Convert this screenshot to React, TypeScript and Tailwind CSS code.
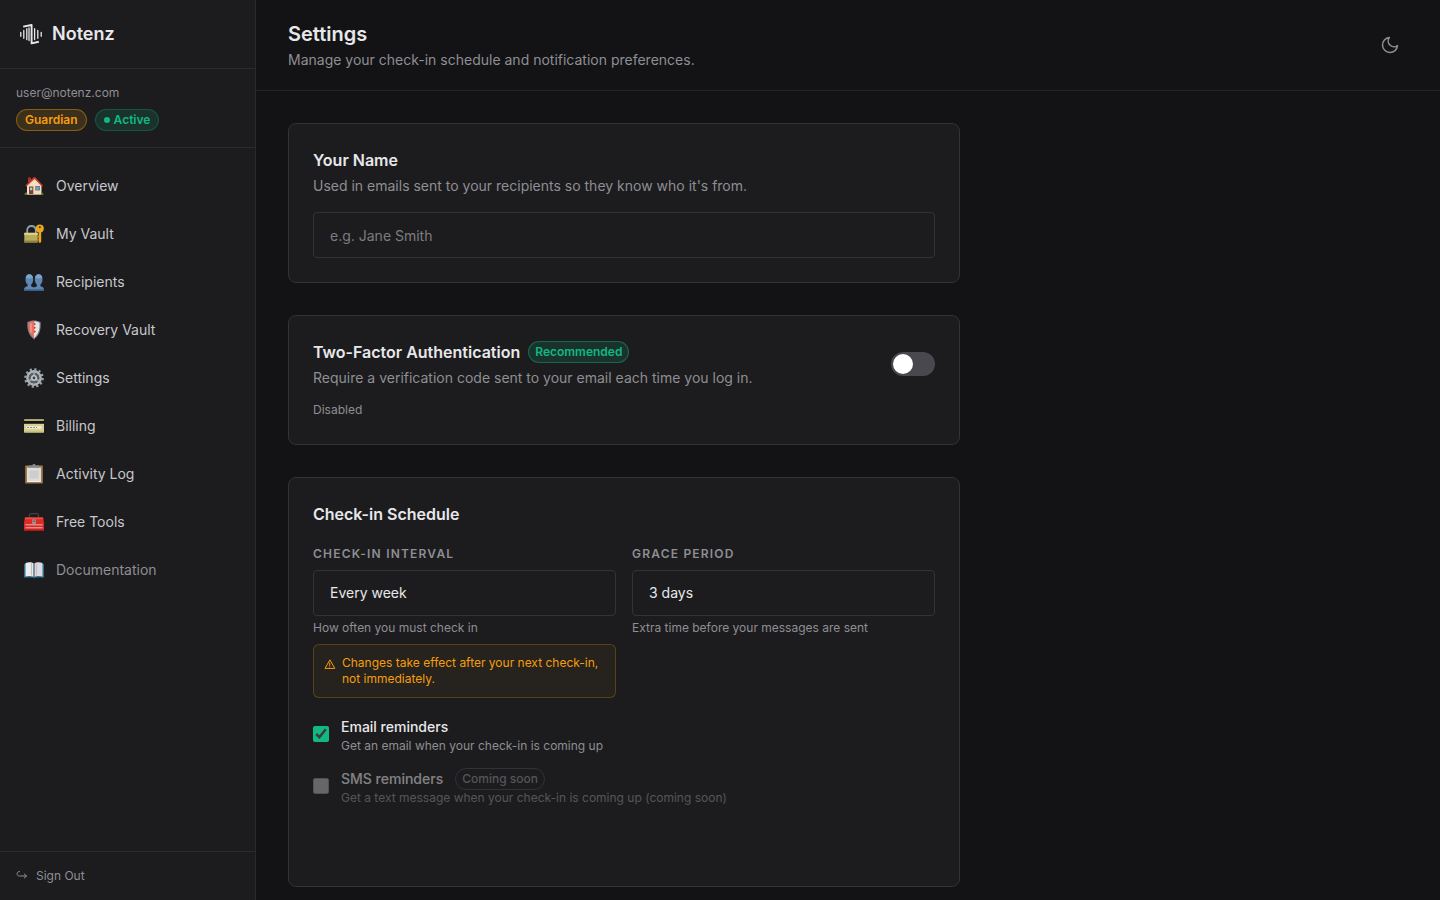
import React, { useState } from "react";

const HomeIcon = () => (
    <svg width="20" height="20" viewBox="0 0 20 20" aria-hidden="true">
        <path d="M4 1.5h3v5H4z" fill="#a8322b" />
        <path d="M3 9l7-7 7.5 7v9.5H3z" fill="#f2dfc0" />
        <path d="M1.4 9.6L9.6 1.2h1.8l7.6 8.4-1 .8L10.6 3 2.4 10.6z" fill="#c23b32" />
        <path d="M5 10.5h4.3v8H5z" fill="#7a4630" />
        <path d="M6 11.6h2.3v2.6H6z" fill="#a9d3ec" />
        <path d="M11.3 10h4.6v4.4h-4.6z" fill="#8a5a3c" />
        <path d="M11.9 10.6h3.4v3.2h-3.4z" fill="#58a6dc" />
        <path d="M3 18h14.6v.9H3z" fill="#b9a68c" />
        <path d="M.6 18.8c0-2 .9-2.8 2.6-2.2v2.2zM17 18.8v-2.3c1.6-.4 2.5.6 2.5 2.3z" fill="#5d8c36" />
    </svg>
);

const VaultIcon = () => (
    <svg width="20" height="20" viewBox="0 0 20 20" aria-hidden="true">
        <path d="M3.2 10V6.6C3.2 3.6 4.9 2 7.4 2s4.4 1.6 4.4 4.6V10" fill="none" stroke="#8fa0ad" strokeWidth="1.8" />
        <path d="M0.3 8.8h13.4v9.7H.3z" fill="#b9ad5c" />
        <path d="M.3 8.8h13.4V11H.3z" fill="#dbd189" />
        <path d="M.3 16.6h13.4v1.9H.3z" fill="#8c8240" />
        <circle cx="15.8" cy="4.6" r="4" fill="#e9a820" />
        <circle cx="15.8" cy="3.2" r="1.1" fill="#5c420d" />
        <path d="M14.6 8h2.6v9.5l-1.2 1.8-1.4-1.4z" fill="#e9a820" />
        <path d="M13.4 11.5h1.4V14h-1.4zM13.4 15h1.4v1.5h-1.4z" fill="#c98913" />
    </svg>
);

const RecipientsIcon = () => (
    <svg width="20" height="20" viewBox="0 0 20 20" aria-hidden="true">
        <path d="M0 18.5c0-2.8 1-3.6 3.6-4.3v-1.5C2 11.300 1.500 9.500 1.500 7.200 1.500 4.300 3 2.300 5.300 2.300s3.900 2 3.900 4.900c0 2.300-.6 4.100-2.100 5.500v1.500l2.900 1.300 2.900-1.300v-1.500c-1.500-1.400-2.100-3.200-2.100-5.500 0-2.900 1.600-4.900 3.900-4.900s3.800 2 3.800 4.900c0 2.300-.5 4.100-2.100 5.500v1.500c2.600.7 3.600 1.500 3.600 4.300z" fill="#5d88b3" />
        <path d="M5.300 2.300c2 0 3.300 1.300 3.700 3.500-1.800 1-5.600 1-7.300 0 .4-2.200 1.700-3.500 3.600-3.500zM14.700 2.300c2 0 3.200 1.300 3.600 3.500-1.800 1-5.500 1-7.300 0 .4-2.200 1.700-3.500 3.700-3.500z" fill="#7ba4ca" />
        <path d="M.2 16.800c3 .5 16.600.5 19.600 0l.2 1.700H0z" fill="#416a94" />
    </svg>
);

const ShieldIcon = () => (
    <svg width="20" height="20" viewBox="0 0 20 20" aria-hidden="true">
        <path d="M10 .5c2.600 0 4.800.5 6.600 1.600.5 7-.6 12.800-6.600 17.400C4 14.900 2.900 9.100 3.400 2.100 5.200 1 7.400.5 10 .5z" fill="#7c8286" />
        <path d="M10 1.600c2.200 0 4 .4 5.500 1.200.3 6-.8 11.200-5.500 15.200z" fill="#e3e5e6" />
        <path d="M10 1.600c-2.200 0-4 .4-5.500 1.200-.3 6 .8 11.200 5.500 15.200z" fill="#ec6f5d" />
        <path d="M10 2.500L12 4l-2 1.500zM10 6.300l2 1.500-2 1.500zM10 10l2 1.500-2 1.500z" fill="#cc3e30" />
        <path d="M7 3v9.500" stroke="#f7a497" strokeWidth="1.200" />
    </svg>
);

const GearIcon = () => (
    <svg width="20" height="20" viewBox="0 0 20 20" aria-hidden="true">
        <circle cx="10" cy="10" r="8.700" fill="none" stroke="#9ba4ab" strokeWidth="2.200" strokeDasharray="2.200 2.355" />
        <circle cx="10" cy="10" r="6.600" fill="none" stroke="#aab2b8" strokeWidth="2.600" />
        <circle cx="10" cy="10" r="5.200" fill="#596067" />
        <path d="M10 10V4.500M10 10l5 3M10 10l-5 3" stroke="#a1aab1" strokeWidth="1.500" />
        <circle cx="10" cy="10" r="3" fill="#c3cacf" />
        <circle cx="10" cy="10" r="1.400" fill="#3c4247" />
    </svg>
);

const BillingIcon = () => (
    <svg width="20" height="20" viewBox="0 0 20 20" aria-hidden="true">
        <rect y="3.300" width="20" height="13.400" rx="1" fill="#d8cf91" />
        <path d="M0 4.800h20v3H0z" fill="#17150f" />
        <path d="M2 10.200h15.500v2.600H2z" fill="#f0edda" />
        <path d="M3 11.500h10" stroke="#7d98b4" strokeWidth="1" strokeDasharray="2 1" />
        <path d="M.4 15.700h19.200v1H.4z" fill="#a79c5b" />
    </svg>
);

const ActivityIcon = () => (
    <svg width="20" height="20" viewBox="0 0 20 20" aria-hidden="true">
        <rect x="1.200" y="1.500" width="17.600" height="18" rx=".8" fill="#a47b48" />
        <path d="M3 3.600h14v14.200H3z" fill="#dcdcdc" />
        <path d="M5.500 6.500h9v8h-9z" fill="#cdcdcd" />
        <path d="M3 17h14v.9H3z" fill="#f5f5f5" />
        <path d="M5 1.600h3.200C8.500.500 9.100 0 10 0s1.500.500 1.800 1.600H15v2.200H5z" fill="#868b8f" />
    </svg>
);

const ToolsIcon = () => (
    <svg width="20" height="20" viewBox="0 0 20 20" aria-hidden="true">
        <path d="M5.500 6V3.200c0-1 .6-1.600 1.600-1.600h5.800c1 0 1.600.6 1.600 1.600V6" fill="none" stroke="#3d4043" strokeWidth="1.300" />
        <path d="M1 5.600h18l1 5v8.400H0v-8.400z" fill="#dd2a24" />
        <path d="M1 5.600h18l.3 1.600H.7z" fill="#f04e43" />
        <path d="M1.500 12.800h17M1.500 15.800h17" stroke="#e7b7b5" strokeWidth="1" />
        <path d="M8.300 7.500h3.400v4.300H8.300z" fill="#9da2a6" />
        <path d="M9.300 8.500h1.400v1.400H9.300z" fill="#4a4e52" />
        <path d="M0 17.600h20V19H0z" fill="#a81915" />
    </svg>
);

const BookIcon = () => (
    <svg width="20" height="20" viewBox="0 0 20 20" aria-hidden="true">
        <path d="M0 4h20v13.600h-8.500l-1.500.6-1.500-.6H0z" fill="#2d6f8e" />
        <path d="M1.500 3C4.500 1.700 8 1.900 9.700 3.300v13.500c-2.300-1-5.500-1.100-8.200-.3z" fill="#ececee" />
        <path d="M18.500 3c-3-1.300-6.500-1.100-8.200.3v13.500c2.300-1 5.500-1.100 8.200-.3z" fill="#dcdce0" />
        <path d="M7.500 3v12.500M12.500 3v12.500" stroke="#bfbfc5" strokeWidth="1.200" />
        <path d="M10 3.200v14" stroke="#55606a" strokeWidth="1" />
    </svg>
);

const navItems = [
    { icon: <HomeIcon />, label: "Overview" },
    { icon: <VaultIcon />, label: "My Vault" },
    { icon: <RecipientsIcon />, label: "Recipients" },
    { icon: <ShieldIcon />, label: "Recovery Vault" },
    { icon: <GearIcon />, label: "Settings" },
    { icon: <BillingIcon />, label: "Billing" },
    { icon: <ActivityIcon />, label: "Activity Log" },
    { icon: <ToolsIcon />, label: "Free Tools" },
    { icon: <BookIcon />, label: "Documentation", muted: true },
];

const Logo: React.FC = () => (
    <svg width="22" height="22" viewBox="0 0 22 22" fill="none" stroke="#e8e8ea" aria-hidden="true">
        <path d="M.8 9.300v4M3.800 7.300v8M6.800 5.600v11M9 5v12.500M14.600 5.600v11M17.800 7.300v8M21.200 9.300v4" strokeWidth="1.300" strokeLinecap="round" />
        <path d="M3.200 3.600L11.600 2V20.400L18.800 18.800" strokeWidth="1.900" strokeLinejoin="round" />
    </svg>
);

const Sidebar: React.FC = () => {
    return (
        <aside className="w-64 shrink-0 h-full flex flex-col bg-[#1c1c1e] border-r border-[#2a2a2d]">
            <div className="flex items-center gap-2.5 px-5 py-5 border-b border-[#2a2a2d]">
                <Logo />
                <span className="text-lg font-semibold text-[#e8e8ea]">Notenz</span>
            </div>
            <div className="p-4 border-b border-[#2a2a2d]">
                <p className="text-xs text-[#8e8e93]">user@notenz.com</p>
                <div className="flex gap-2 mt-2 text-xs font-semibold">
                    <span className="px-2 py-0.5 rounded-full border border-[#f59e0b]/40 bg-[#f59e0b]/15 text-[#f59e0b]">Guardian</span>
                    <span className="flex items-center gap-1 px-2 py-0.5 rounded-full border border-[#10b981]/25 bg-[#10b981]/15 text-[#10b981]">
                        <span className="size-1.5 rounded-full bg-[#10b981]" />
                        Active
                    </span>
                </div>
            </div>
            <nav className="flex-1 flex flex-col gap-1 px-3 py-4">
                {navItems.map((item) => (
                    <a
                        key={item.label}
                        href="#"
                        className={`flex items-center gap-3 h-11 px-3 rounded-md text-sm ${item.muted ? "text-[#8e8e93]" : "text-[#c7c7cc]"}`}
                    >
                        {item.icon}
                        {item.label}
                    </a>
                ))}
            </nav>
            <div className="p-4 border-t border-[#2a2a2d]">
                <button type="button" className="flex items-center gap-2 text-xs text-[#8e8e93]">
                    <svg width="12" height="12" viewBox="0 0 12 12" fill="none" stroke="currentColor" strokeLinecap="round" strokeLinejoin="round" aria-hidden="true">
                        <path d="M3.500 1.500C.200 1.500.200 6 3.500 6H10.500M8.300 4L10.500 6 8.300 8" />
                    </svg>
                    Sign Out
                </button>
            </div>
        </aside>
    );
};

const card = "rounded-lg border border-[#333336] bg-[#1c1c1e] p-6";
const field = "block w-full h-[46px] px-4 rounded-sm border border-[#333336] bg-[#1c1c1e] text-sm text-[#e8e8ea] appearance-none placeholder:text-[#7c7c80]";
const fieldLabel = "block mb-2 text-xs font-semibold uppercase tracking-widest text-[#8e8e93]";

const App: React.FC = () => {
    const [twoFactor, setTwoFactor] = useState(false);
    const [emailReminders, setEmailReminders] = useState(true);

    return (
        <div className="flex h-screen bg-[#131315] text-[#e8e8ea] font-['Inter',sans-serif]">
            <Sidebar />
            <div className="flex-1 min-w-0 flex flex-col">
                <header className="flex items-center justify-between px-8 py-5 border-b border-[#232326]">
                    <div>
                        <h1 className="text-xl font-semibold">Settings</h1>
                        <p className="mt-0.5 text-sm text-[#8e8e93]">Manage your check-in schedule and notification preferences.</p>
                    </div>
                    <button type="button" aria-label="Toggle theme" className="size-9 flex items-center justify-center text-[#8e8e93]">
                        <svg width="20" height="20" viewBox="0 0 24 24" fill="none" stroke="currentColor" strokeWidth="1.800" strokeLinecap="round" strokeLinejoin="round">
                            <path d="M21 12.790A9 9 0 1 1 11.210 3 7 7 0 0 0 21 12.790z" />
                        </svg>
                    </button>
                </header>
                <main className="flex-1 overflow-y-auto p-8">
                    <div className="max-w-2xl flex flex-col gap-8">
                        <section className={card}>
                            <h2 className="font-semibold"><label htmlFor="name">Your Name</label></h2>
                            <p className="mt-1 mb-4 text-sm text-[#8e8e93]">Used in emails sent to your recipients so they know who it's from.</p>
                            <input id="name" type="text" placeholder="e.g. Jane Smith" className={field} />
                        </section>

                        <section className={card}>
                            <div className="flex items-center justify-between">
                                <div>
                                    <div className="flex items-center gap-2 h-6">
                                        <h2 className="font-semibold">Two-Factor Authentication</h2>
                                        <span className="px-1.5 py-0.5 rounded-full border border-[#10b981]/40 bg-[#10b981]/15 text-xs font-semibold text-[#10b981]">Recommended</span>
                                    </div>
                                    <p className="mt-1 text-sm text-[#8e8e93]">Require a verification code sent to your email each time you log in.</p>
                                </div>
                                <button
                                    type="button"
                                    role="switch"
                                    aria-checked={twoFactor}
                                    aria-label="Two-Factor Authentication"
                                    onClick={() => setTwoFactor(!twoFactor)}
                                    className={`flex w-11 h-6 p-0.5 rounded-full ${twoFactor ? "justify-end bg-[#10b981]" : "bg-[#48484e]"}`}
                                >
                                    <span className="size-5 rounded-full bg-white" />
                                </button>
                            </div>
                            <p className="mt-3 text-xs leading-5 text-[#8e8e93]">{twoFactor ? "Enabled" : "Disabled"}</p>
                        </section>

                        <section className={`${card} pb-20`}>
                            <h2 className="mb-5 font-semibold">Check-in Schedule</h2>
                            <div className="grid grid-cols-2 gap-4">
                                <div>
                                    <label htmlFor="interval" className={fieldLabel}>Check-in interval</label>
                                    <select id="interval" className={field} defaultValue="week">
                                        <option value="week">Every week</option>
                                    </select>
                                    <p className="mt-1 text-xs text-[#8e8e93]">How often you must check in</p>
                                    <div className="flex items-start gap-1.5 mt-2 p-2.5 rounded-md border border-[#f59e0b]/25 bg-[#f59e0b]/5 text-xs text-[#f59e0b]">
                                        <svg className="shrink-0 mt-0.5" width="12" height="14" viewBox="0 0 12 14" fill="none" stroke="currentColor" strokeLinecap="round" strokeLinejoin="round" aria-hidden="true">
                                            <path d="M5.700 3.200L1 11.400H10.400zM5.700 6v2.700M5.700 9.900v.1" />
                                        </svg>
                                        <span>Changes take effect after your next check-in, not immediately.</span>
                                    </div>
                                </div>
                                <div>
                                    <label htmlFor="grace" className={fieldLabel}>Grace period</label>
                                    <select id="grace" className={field} defaultValue="3">
                                        <option value="3">3 days</option>
                                    </select>
                                    <p className="mt-1 text-xs text-[#8e8e93]">Extra time before your messages are sent</p>
                                </div>
                            </div>
                            <div className="flex flex-col gap-3.5 mt-4.5">
                                <label className="flex items-start gap-3">
                                    <input
                                        type="checkbox"
                                        checked={emailReminders}
                                        onChange={() => setEmailReminders(!emailReminders)}
                                        className="size-4 mt-2.5 accent-[#10b981]"
                                    />
                                    <span>
                                        <span className="block text-sm leading-[22px] font-medium">Email reminders</span>
                                        <span className="block text-xs text-[#8e8e93]">Get an email when your check-in is coming up</span>
                                    </span>
                                </label>
                                <label className="flex items-start gap-3 opacity-50">
                                    <input type="checkbox" disabled className="size-4 mt-2.5" />
                                    <span>
                                        <span className="flex items-center gap-3 text-sm leading-[22px] font-medium">
                                            SMS reminders
                                            <span className="px-1.5 rounded-full border border-[#48484e] text-xs leading-5 text-[#8e8e93]">Coming soon</span>
                                        </span>
                                        <span className="block text-xs text-[#8e8e93]">Get a text message when your check-in is coming up (coming soon)</span>
                                    </span>
                                </label>
                            </div>
                        </section>
                    </div>
                </main>
            </div>
        </div>
    );
};

export default App;
